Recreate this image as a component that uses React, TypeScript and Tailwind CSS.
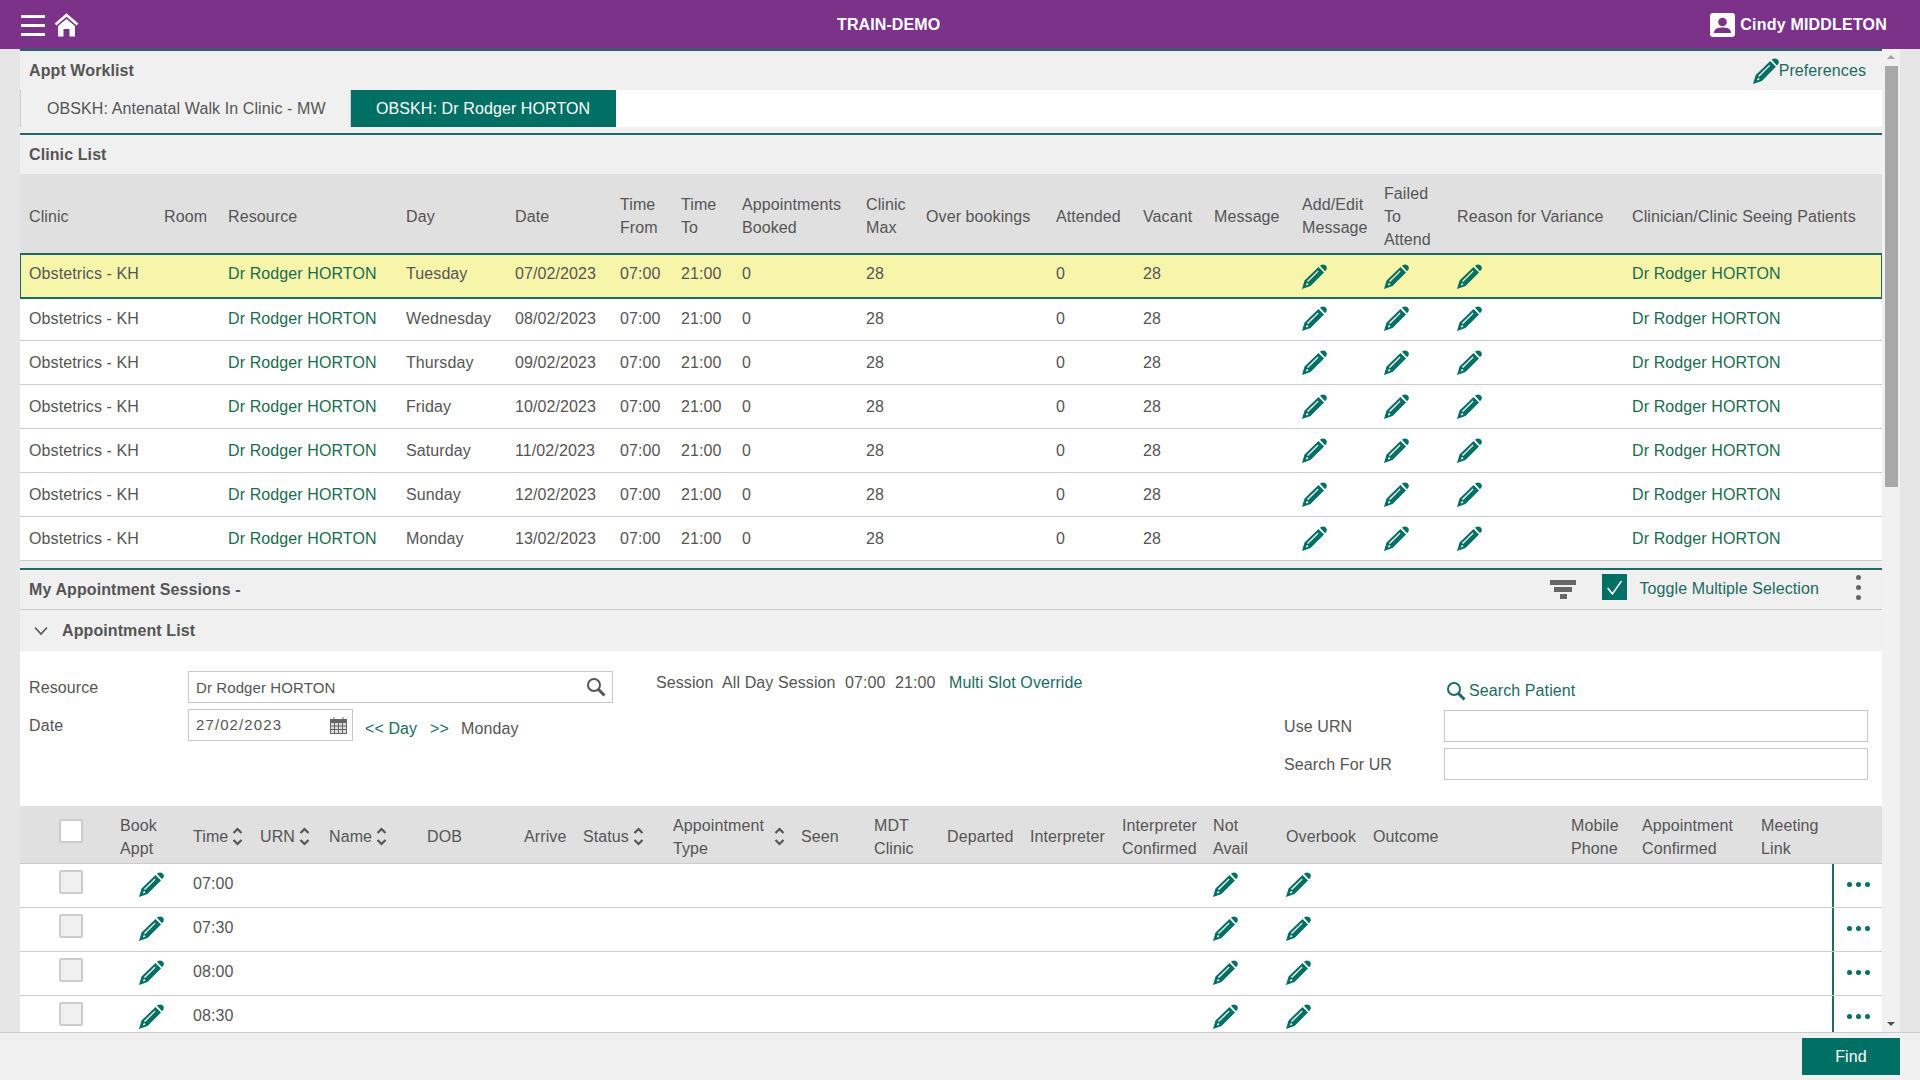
const clinicCols =
  "grid grid-cols-[144px_64px_178px_109px_105px_61px_61px_124px_60px_130px_87px_71px_88px_82px_73px_175px_250px] items-center";
const apptCols =
  "grid grid-cols-[100px_73px_67px_69px_98px_97px_59px_90px_128px_73px_73px_83px_92px_91px_73px_87px_198px_71px_119px_71px_50px] items-center";

const clinicRows = [
  { day: "Tuesday", date: "07/02/2023" },
  { day: "Wednesday", date: "08/02/2023" },
  { day: "Thursday", date: "09/02/2023" },
  { day: "Friday", date: "10/02/2023" },
  { day: "Saturday", date: "11/02/2023" },
  { day: "Sunday", date: "12/02/2023" },
  { day: "Monday", date: "13/02/2023" },
];

const Pencil = ({ className = "w-[25px] h-[25px]" }: { className?: string }) => (
  <svg viewBox="0 0 25 25" className={`${className} text-[#006f64] shrink-0`} fill="currentColor">
    <path
      fillRule="evenodd"
      d="M0 25 L2.5 16.5 L16.5 3 L22 8.5 L8.5 22 Z M5 17 L6 18 L16.5 7.5 L15.8 6.5 Z M4 21 L4.8 21.6 L6.5 20.2 L5 18.7 Z"
    />
    <path d="M18 1.8 L19 1 C21 -0.3 23.6 0.6 24.5 2.6 C25.2 4.2 24.7 5.6 23.6 6.6 L23 7.2 Z" />
  </svg>
);

const SortIcon = () => (
  <svg viewBox="0 0 11 19" className="w-[11px] h-[19px] shrink-0" fill="none" stroke="#555" strokeWidth="2.2">
    <path d="M1.5 6 L5.5 2 L9.5 6" />
    <path d="M1.5 13 L5.5 17 L9.5 13" />
  </svg>
);

const Sort = ({ label }: { label: string }) => (
  <div className="flex items-center gap-[4px]">
    <span>{label}</span>
    <SortIcon />
  </div>
);

const SearchIcon = ({ className }: { className: string }) => (
  <svg viewBox="0 0 20 20" className={className} fill="none" stroke="currentColor">
    <circle cx="8" cy="8" r="6" strokeWidth="2" />
    <path d="M12.5 12.5 L18.5 18.5" strokeWidth="3" />
  </svg>
);

const Input = ({ className, children }: { className: string; children?: React.ReactNode }) => (
  <div className={`h-8 border border-[#c8c8c8] bg-white flex items-center justify-between px-[7px] ${className}`}>
    {children}
  </div>
);

export default function App() {
  return (
    <div className="h-screen flex flex-col overflow-hidden bg-[#e6e6e6] text-[16px] leading-[23px] tracking-[0.1px] text-[#555] font-['Liberation_Sans','Arial',sans-serif]">
      <header className="h-[49px] shrink-0 bg-[#7b3288] text-white flex items-center pl-[21px] pr-[33px]">
        <div className="w-6 flex flex-col gap-[6px] mt-px">
          <div className="h-[3px] bg-white" />
          <div className="h-[3px] bg-white" />
          <div className="h-[3px] bg-white" />
        </div>
        <svg viewBox="0 0 25 24" className="w-[25px] h-6 ml-[9px]" fill="white">
          <path d="M12.5 6 L21 13 V23.5 H15.5 V16 H9.5 V23.5 H4 V13 Z" />
          <path d="M1.5 11.5 L12.5 2 L23.5 11.5" fill="none" stroke="white" strokeWidth="2.6" />
        </svg>
        <div className="flex-1 text-center font-bold -ml-[12px]">TRAIN-DEMO</div>
        <svg viewBox="0 0 25 24" className="w-[25px] h-6">
          <rect width="25" height="24" rx="3" fill="white" />
          <circle cx="12.5" cy="9" r="4.3" fill="#7b3288" />
          <path d="M4 20 C4 15.5 8 14.5 12.5 14.5 C17 14.5 21 15.5 21 20 Z" fill="#7b3288" />
        </svg>
        <span className="ml-[5px] font-bold tracking-[0.2px]">Cindy MIDDLETON</span>
      </header>

      <div className="flex-1 min-h-0 flex">
        <div className="w-5 shrink-0" />
        <main className="w-[1862px] shrink-0 overflow-hidden bg-[#f0f0f0]">
          <div className="border-t-2 border-[#1e6a66] h-[41px] flex items-center justify-between pl-[9px] pr-4">
            <span className="font-bold">Appt Worklist</span>
            <div className="flex items-center text-[#1a6b62]">
              <Pencil className="w-[26px] h-[26px]" />
              <span>Preferences</span>
            </div>
          </div>
          <div className="h-[37px] bg-white flex">
            <div className="w-[331px] bg-[#f0f0f0] border-x border-[#ccc] pl-[26px] flex items-center">
              OBSKH: Antenatal Walk In Clinic - MW
            </div>
            <div className="w-[265px] bg-[#006f64] text-white pl-[25px] flex items-center">
              OBSKH: Dr Rodger HORTON
            </div>
          </div>
          <div className="h-[6px]" />

          <div className="border-t-2 border-[#1e6a66] h-[41px] flex items-center pl-[9px] font-bold">Clinic List</div>
          <div className={`${clinicCols} h-[79px] pt-[5px] bg-[#e0e0e0]`}>
            <div className="pl-[9px]">Clinic</div>
            <div>Room</div>
            <div>Resource</div>
            <div>Day</div>
            <div>Date</div>
            <div>Time<br />From</div>
            <div>Time<br />To</div>
            <div>Appointments<br />Booked</div>
            <div>Clinic<br />Max</div>
            <div>Over bookings</div>
            <div>Attended</div>
            <div>Vacant</div>
            <div>Message</div>
            <div>Add/Edit<br />Message</div>
            <div>Failed<br />To<br />Attend</div>
            <div>Reason for Variance</div>
            <div>Clinician/Clinic Seeing Patients</div>
          </div>
          {clinicRows.map((r, i) => {
            const text = i === 0 ? "pb-[6px]" : "";
            return (
              <div
                key={r.date}
                className={
                  i === 0
                    ? `${clinicCols} relative z-10 h-[46px] -mb-[2px] border-y-2 border-[#1e6a66] bg-[#f7f5aa] shadow-[inset_1px_0_0_#1e6a66,inset_-1px_0_0_#1e6a66]`
                    : `${clinicCols} h-[44px] bg-white border-b border-[#ccc]`
                }
              >
                <div className={`pl-[9px] ${text}`}>Obstetrics - KH</div>
                <div />
                <div className={`${text} text-[#1a6b4f]`}>Dr Rodger HORTON</div>
                <div className={text}>{r.day}</div>
                <div className={text}>{r.date}</div>
                <div className={text}>07:00</div>
                <div className={text}>21:00</div>
                <div className={text}>0</div>
                <div className={text}>28</div>
                <div />
                <div className={text}>0</div>
                <div className={text}>28</div>
                <div />
                <Pencil />
                <Pencil />
                <Pencil />
                <div className={`${text} text-[#1a6b4f]`}>Dr Rodger HORTON</div>
              </div>
            );
          })}
          <div className="h-[7px]" />

          <div className="border-t-2 border-[#1e6a66] border-b border-b-[#ccc] h-[42px] flex items-center justify-between pl-[9px] pr-[21px]">
            <span className="font-bold">My Appointment Sessions -</span>
            <div className="flex items-center">
              <svg viewBox="0 0 26 19" className="w-[26px] h-[19px]" fill="#666">
                <rect width="26" height="5" />
                <rect x="4" y="7" width="18" height="5" />
                <rect x="10" y="14" width="7" height="5" />
              </svg>
              <div className="ml-[26px] mb-[5px] w-[25px] h-[26px] bg-[#006f64] flex items-center justify-center">
                <svg viewBox="0 0 16 16" className="w-[17px] h-[17px]" fill="none" stroke="white" strokeWidth="1.5">
                  <path d="M1.5 8.5 L6 14 L14.5 2" />
                </svg>
              </div>
              <span className="ml-[13px] mb-[2px] text-[#1a6b62]">Toggle Multiple Selection</span>
              <div className="ml-[37px] mb-[4px] w-[5px] flex flex-col gap-[5px]">
                <div className="h-[5px] rounded-full bg-[#666]" />
                <div className="h-[5px] rounded-full bg-[#666]" />
                <div className="h-[5px] rounded-full bg-[#666]" />
              </div>
            </div>
          </div>
          <div className="h-[41px] flex items-center pl-[14px] font-bold">
            <svg viewBox="0 0 14 10" className="w-[14px] h-[10px]" fill="none" stroke="#555" strokeWidth="1.6">
              <path d="M1 1.5 L7 8 L13 1.5" />
            </svg>
            <span className="ml-[14px]">Appointment List</span>
          </div>

          <div className="h-[155px] bg-white flex">
            <div className="w-[636px] pl-[9px] pt-5">
              <div className="flex items-center">
                <span className="w-[159px]">Resource</span>
                <Input className="w-[425px] text-[15px]">
                  Dr Rodger HORTON
                  <SearchIcon className="w-5 h-5 text-[#555] -mr-px" />
                </Input>
              </div>
              <div className="flex items-center mt-[6px]">
                <span className="w-[159px]">Date</span>
                <Input className="w-[165px] text-[15px] tracking-[1.1px]">
                  <span className="-mt-[2px]">27/02/2023</span>
                  <svg viewBox="0 0 17 17" className="w-[17px] h-[17px] -mr-[2px]" fill="none" stroke="#666">
                    <rect x="0.5" y="2.5" width="16" height="14" fill="#ddd" />
                    <rect x="0.5" y="2.5" width="16" height="3" fill="#666" />
                    <path d="M0.5 9 H16.5 M0.5 12.5 H16.5 M4.5 6 V16 M8.5 6 V16 M12.5 6 V16 M4 0 V3 M13 0 V3" />
                  </svg>
                </Input>
                <div className="flex mt-[6px] ml-3">
                  <span className="w-[65px] text-[#1a6b62]">&lt;&lt; Day</span>
                  <span className="w-[31px] text-[#1a6b62]">&gt;&gt;</span>
                  <span>Monday</span>
                </div>
              </div>
            </div>
            <div className="w-[628px] pt-5 flex items-start">
              <span className="w-[66px]">Session</span>
              <span className="w-[123px]">All Day Session</span>
              <span className="w-[50px]">07:00</span>
              <span className="w-[54px]">21:00</span>
              <span className="text-[#1a6b62]">Multi Slot Override</span>
            </div>
            <div className="w-[584px] pt-[28px]">
              <div className="pl-[162px] flex items-center gap-[3px] text-[#1a6b62]">
                <SearchIcon className="w-5 h-5" />
                <span>Search Patient</span>
              </div>
              <div className="flex items-center mt-2">
                <span className="w-[160px]">Use URN</span>
                <Input className="w-[424px]" />
              </div>
              <div className="flex items-center mt-[6px]">
                <span className="w-[160px]">Search For UR</span>
                <Input className="w-[424px]" />
              </div>
            </div>
          </div>

          <div className={`${apptCols} h-[58px] pt-[4px] bg-[#e0e0e0] border-b border-[#ccc]`}>
            <div className="pl-[39px]">
              <div className="w-6 h-6 -mt-[12px] rounded-[2px] bg-white border-2 border-[#ccc]" />
            </div>
            <div>Book<br />Appt</div>
            <Sort label="Time" />
            <Sort label="URN" />
            <Sort label="Name" />
            <div>DOB</div>
            <div>Arrive</div>
            <Sort label="Status" />
            <div className="flex items-center gap-[10px]">
              <span>Appointment<br />Type</span>
              <SortIcon />
            </div>
            <div>Seen</div>
            <div>MDT<br />Clinic</div>
            <div>Departed</div>
            <div>Interpreter</div>
            <div>Interpreter<br />Confirmed</div>
            <div>Not<br />Avail</div>
            <div>Overbook</div>
            <div>Outcome</div>
            <div>Mobile<br />Phone</div>
            <div>Appointment<br />Confirmed</div>
            <div>Meeting<br />Link</div>
            <div />
          </div>
          {["07:00", "07:30", "08:00", "08:30"].map((t) => (
            <div key={t} className={`${apptCols} h-[44px] bg-white border-b border-[#ccc]`}>
              <div className="pl-[39px]">
                <div className="w-6 h-6 -mt-[7px] rounded-[2px] bg-[#f0f0f0] border-2 border-[#ccc]" />
              </div>
              <div className="pl-[19px] pb-[2px]"><Pencil /></div>
              <div className="pb-[5px]">{t}</div>
              <div />
              <div />
              <div />
              <div />
              <div />
              <div />
              <div />
              <div />
              <div />
              <div />
              <div />
              <div className="pb-[2px]"><Pencil /></div>
              <div className="pb-[2px]"><Pencil /></div>
              <div />
              <div />
              <div />
              <div />
              <div className="h-full border-l-2 border-[#1e6a66] flex items-center gap-1 pl-[13px] pb-[3px]">
                <div className="w-[5px] h-[5px] rounded-full bg-[#006f64]" />
                <div className="w-[5px] h-[5px] rounded-full bg-[#006f64]" />
                <div className="w-[5px] h-[5px] rounded-full bg-[#006f64]" />
              </div>
            </div>
          ))}
        </main>
        <div className="w-[18px] shrink-0 bg-[#f1f1f1] flex flex-col items-center">
          <div className="mt-[6px] w-0 h-0 border-x-[4px] border-x-transparent border-b-[4px] border-b-[#a3a3a3]" />
          <div className="mt-[7px] w-[13px] h-[421px] bg-[#a8a8a8]" />
          <div className="mt-auto mb-[6px] w-0 h-0 border-x-[4px] border-x-transparent border-t-[4px] border-t-[#505050]" />
        </div>
        <div className="w-5 shrink-0" />
      </div>

      <footer className="h-[48px] shrink-0 bg-[#f0f0f0] border-t border-[#ccc] flex justify-end pt-[5px] pr-5">
        <div className="w-[98px] h-[37px] bg-[#006f64] text-white flex items-center justify-center">Find</div>
      </footer>
    </div>
  );
}
